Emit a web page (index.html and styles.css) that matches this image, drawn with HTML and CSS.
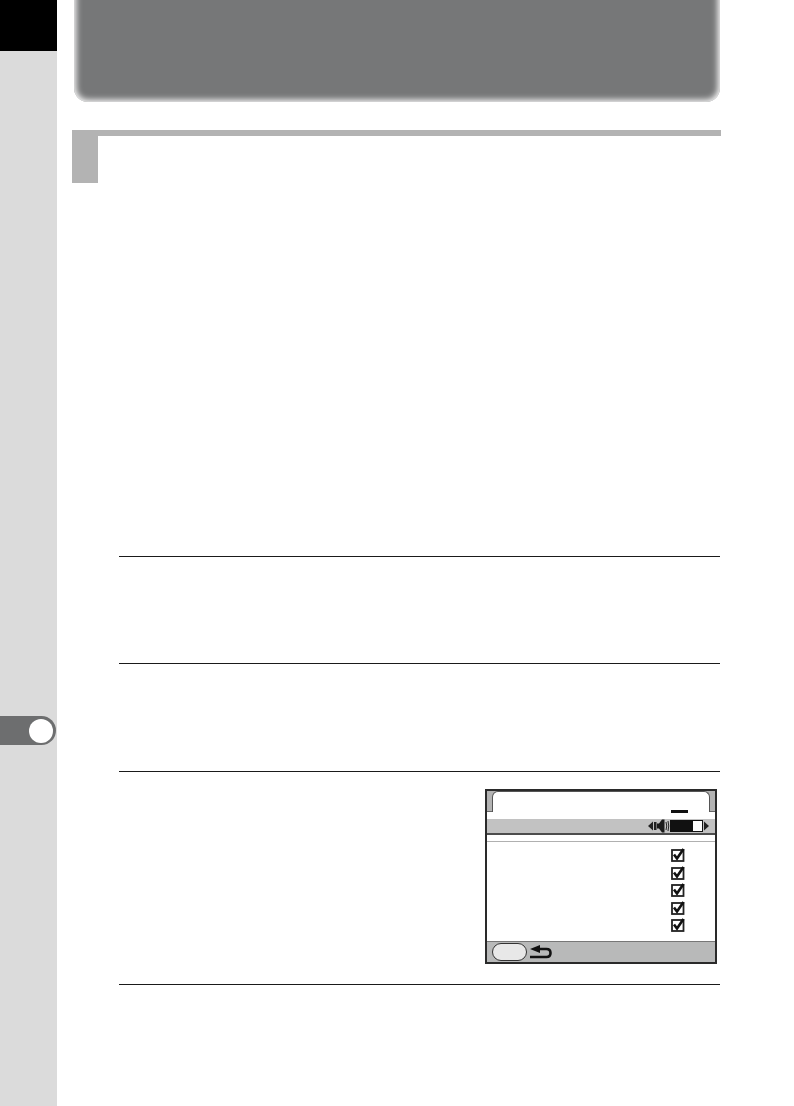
FILE: index.html
```html
<!DOCTYPE html>
<html lang="en">
<head>
<meta charset="utf-8">
<title>Manual page</title>
<link rel="stylesheet" href="styles.css">
</head>
<body>
<div class="page">
  <aside class="side">
    <div class="side-black"></div>
    <div class="side-tab"><span class="side-dot"></span></div>
  </aside>
  <main class="main">
    <div class="banner"></div>
    <div class="section-head"><div class="section-block"></div></div>
    <div class="step step-1"></div>
    <div class="step step-2"></div>
    <div class="step step-3">
      <div class="lcd">
        <div class="lcd-top">
          <div class="lcd-tab"><span class="lcd-dash"></span></div>
        </div>
        <div class="lcd-band">
          <svg class="lcd-volume" width="61" height="14" viewBox="0 0 61 14">
            <path d="M0 7 5 2.500V11.500Z" fill="#222"/>
            <rect x="6" y="3" width="2.500" height="8" fill="#222"/>
            <path d="M9 4.500H11L14 .5H16.500V13.500H14L11 9.500H9Z" fill="#1a1a1a"/>
            <path d="M18 3Q19.500 7 18 11M20 2Q21.500 7 20 12" fill="none" stroke="#222" stroke-width="1"/>
            <rect x="22.500" y="1.500" width="32" height="11" fill="#fff" stroke="#111" stroke-width="1"/>
            <rect x="23" y="2" width="22" height="10" fill="#111"/>
            <path d="M56 2.500 61 7 56 11.500Z" fill="#222"/>
          </svg>
        </div>
        <div class="lcd-list">
          <div class="lcd-row"><svg class="check" viewBox="0 0 14 14"><use href="#tick"/></svg></div>
          <div class="lcd-row"><svg class="check" viewBox="0 0 14 14"><use href="#tick"/></svg></div>
          <div class="lcd-row"><svg class="check" viewBox="0 0 14 14"><use href="#tick"/></svg></div>
          <div class="lcd-row"><svg class="check" viewBox="0 0 14 14"><use href="#tick"/></svg></div>
          <div class="lcd-row"><svg class="check" viewBox="0 0 14 14"><use href="#tick"/></svg></div>
        </div>
        <div class="lcd-foot">
          <span class="lcd-pill"></span>
          <svg class="lcd-back" width="22" height="14" viewBox="0 0 22 14">
            <path d="M10 0V8L0 4Z" fill="#111"/>
            <path d="M8 4H16.500Q20.500 4 20.500 8T16.500 12H0" fill="none" stroke="#111" stroke-width="2.600"/>
          </svg>
        </div>
      </div>
    </div>
    <div class="step step-end"></div>
  </main>
</div>
<svg class="defs" width="0" height="0">
  <defs>
    <g id="tick">
      <rect x="1" y="2" width="11.500" height="11" fill="#fff" stroke="#222" stroke-width="1.800"/>
      <path d="M3 6.500 6 10.500 12.500 1" fill="none" stroke="#111" stroke-width="2.600"/>
    </g>
  </defs>
</svg>
</body>
</html>
```
FILE: styles.css
```css
html, body {
  margin: 0;
  padding: 0;
  background: #fff;
  font-family: "Liberation Sans", sans-serif;
}
.page {
  display: flex;
  width: 794px;
  height: 1106px;
  overflow: hidden;
}
.side {
  width: 57px;
  flex: none;
  background: #dbdbdb;
}
.side-black {
  height: 51px;
  background: #000;
}
.side-tab {
  display: flex;
  align-items: center;
  justify-content: flex-end;
  box-sizing: border-box;
  width: 56px;
  height: 29px;
  margin-top: 665px;
  padding-right: 3px;
  background: #6d6e6f;
  border-radius: 0 15px 15px 0;
}
.side-dot {
  width: 24px;
  height: 24px;
  border-radius: 50%;
  background: #fff;
}
.main {
  flex: 1;
  display: flex;
  flex-direction: column;
  padding-left: 15px;
}
.banner {
  width: 646px;
  height: 112px;
  margin-top: -10px;
  margin-left: 2px;
  background: #767778;
  border-radius: 0 0 14px 14px;
  box-shadow: inset 0 0 6px 2px #fff;
}
.section-head {
  width: 649px;
  height: 53px;
  margin-top: 28px;
  box-sizing: border-box;
  border-top: 6px solid #b3b3b3;
}
.section-block {
  width: 26px;
  height: 47px;
  background: #b3b3b3;
}
.step {
  box-sizing: border-box;
  width: 601px;
  margin-left: 47px;
  border-top: 1px solid #1a1a1a;
}
.step-1 {
  height: 107px;
  margin-top: 373px;
}
.step-2 {
  height: 108px;
}
.step-3 {
  height: 213px;
  display: flex;
  justify-content: flex-end;
  padding-top: 17px;
  padding-right: 3px;
}
.step-end {
  height: 1px;
}
.lcd {
  box-sizing: border-box;
  width: 232px;
  height: 175px;
  display: flex;
  flex-direction: column;
  border: 2px solid #2a2a2a;
  background: #fff;
}
.lcd-top {
  height: 21px;
  padding: 0 5px;
  background: #b3b3b3;
  flex: none;
  display: flex;
  border-bottom: 1px solid #666;
  box-sizing: border-box;
}
.lcd-tab {
  flex: 1;
  height: 21px;
  display: flex;
  justify-content: flex-end;
  align-items: flex-end;
  box-sizing: border-box;
  padding: 0 21px 0 0;
  background: #fff;
  border: 1px solid #555;
  border-bottom: 0;
  border-radius: 6px 6px 0 0;
}
.lcd-dash {
  width: 17px;
  height: 3px;
  margin-bottom: -1px;
  background: #111;
}
.lcd-band {
  height: 16px;
  margin-top: 7px;
  flex: none;
  box-sizing: border-box;
  display: flex;
  justify-content: flex-end;
  align-items: center;
  padding-right: 6px;
  background: #c2c2c2;
  border-bottom: 2px solid #4d4d4d;
}
.lcd-list {
  flex: 1;
  box-sizing: border-box;
  margin-top: 6px;
  padding-top: 6px;
  border-top: 1px solid #b0b0b0;
  display: flex;
  flex-direction: column;
  align-items: flex-end;
  padding-right: 30px;
}
.lcd-row {
  height: 17.500px;
  display: flex;
  align-items: flex-start;
}
.check {
  width: 14px;
  height: 14px;
}
.lcd-foot {
  height: 21px;
  flex: none;
  box-sizing: border-box;
  display: flex;
  align-items: center;
  gap: 3px;
  padding-left: 5px;
  background: #b8b9b9;
  border-top: 1px solid #777;
}
.lcd-pill {
  box-sizing: border-box;
  width: 35px;
  height: 18px;
  background: #e8e8e8;
  border: 1px solid #333;
  border-radius: 9px;
}
.defs {
  position: absolute;
}
```
